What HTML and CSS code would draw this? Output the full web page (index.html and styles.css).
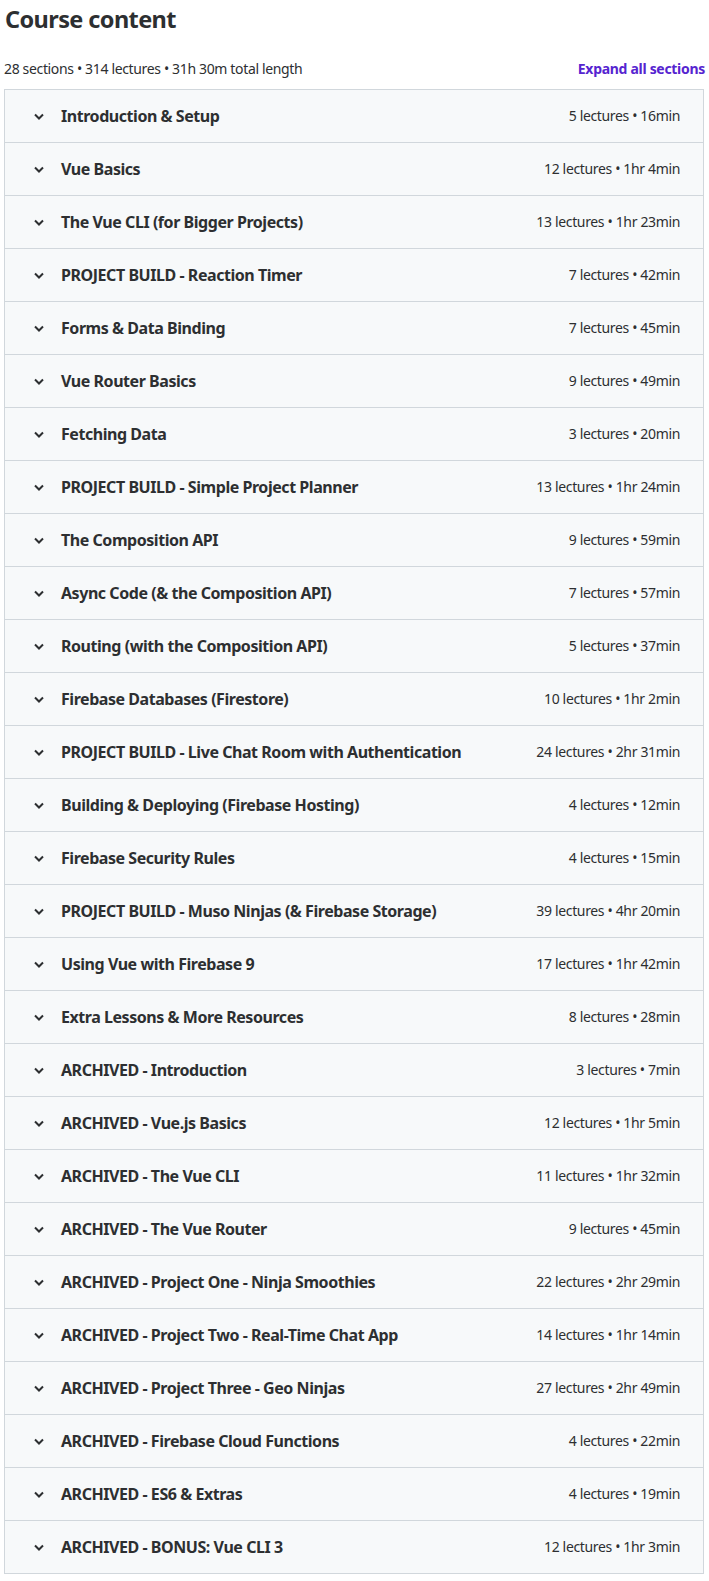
FILE: index.html
```html
<!DOCTYPE html>
<html lang="en">
<head>
<meta charset="utf-8">
<title>Course content</title>
<link rel="stylesheet" href="styles.css">
</head>
<body>
<div class="page">
  <h2 class="heading">Course content</h2>
  <div class="summary">
    <span class="summary-text">28 sections • 314 lectures • 31h 30m total length</span>
    <button class="expand">Expand all sections</button>
  </div>
  <div class="sections">
    <div class="section"><span class="chev"><svg viewBox="0 0 20 20" width="20" height="20"><path d="M6 8.5 L10 12.5 L14 8.5" /></svg></span><span class="title">Introduction &amp; Setup</span><span class="meta">5 lectures • 16min</span></div>
    <div class="section"><span class="chev"><svg viewBox="0 0 20 20" width="20" height="20"><path d="M6 8.5 L10 12.5 L14 8.5" /></svg></span><span class="title">Vue Basics</span><span class="meta">12 lectures • 1hr 4min</span></div>
    <div class="section"><span class="chev"><svg viewBox="0 0 20 20" width="20" height="20"><path d="M6 8.5 L10 12.5 L14 8.5" /></svg></span><span class="title">The Vue CLI (for Bigger Projects)</span><span class="meta">13 lectures • 1hr 23min</span></div>
    <div class="section"><span class="chev"><svg viewBox="0 0 20 20" width="20" height="20"><path d="M6 8.5 L10 12.5 L14 8.5" /></svg></span><span class="title">PROJECT BUILD - Reaction Timer</span><span class="meta">7 lectures • 42min</span></div>
    <div class="section"><span class="chev"><svg viewBox="0 0 20 20" width="20" height="20"><path d="M6 8.5 L10 12.5 L14 8.5" /></svg></span><span class="title">Forms &amp; Data Binding</span><span class="meta">7 lectures • 45min</span></div>
    <div class="section"><span class="chev"><svg viewBox="0 0 20 20" width="20" height="20"><path d="M6 8.5 L10 12.5 L14 8.5" /></svg></span><span class="title">Vue Router Basics</span><span class="meta">9 lectures • 49min</span></div>
    <div class="section"><span class="chev"><svg viewBox="0 0 20 20" width="20" height="20"><path d="M6 8.5 L10 12.5 L14 8.5" /></svg></span><span class="title">Fetching Data</span><span class="meta">3 lectures • 20min</span></div>
    <div class="section"><span class="chev"><svg viewBox="0 0 20 20" width="20" height="20"><path d="M6 8.5 L10 12.5 L14 8.5" /></svg></span><span class="title">PROJECT BUILD - Simple Project Planner</span><span class="meta">13 lectures • 1hr 24min</span></div>
    <div class="section"><span class="chev"><svg viewBox="0 0 20 20" width="20" height="20"><path d="M6 8.5 L10 12.5 L14 8.5" /></svg></span><span class="title">The Composition API</span><span class="meta">9 lectures • 59min</span></div>
    <div class="section"><span class="chev"><svg viewBox="0 0 20 20" width="20" height="20"><path d="M6 8.5 L10 12.5 L14 8.5" /></svg></span><span class="title">Async Code (&amp; the Composition API)</span><span class="meta">7 lectures • 57min</span></div>
    <div class="section"><span class="chev"><svg viewBox="0 0 20 20" width="20" height="20"><path d="M6 8.5 L10 12.5 L14 8.5" /></svg></span><span class="title">Routing (with the Composition API)</span><span class="meta">5 lectures • 37min</span></div>
    <div class="section"><span class="chev"><svg viewBox="0 0 20 20" width="20" height="20"><path d="M6 8.5 L10 12.5 L14 8.5" /></svg></span><span class="title">Firebase Databases (Firestore)</span><span class="meta">10 lectures • 1hr 2min</span></div>
    <div class="section"><span class="chev"><svg viewBox="0 0 20 20" width="20" height="20"><path d="M6 8.5 L10 12.5 L14 8.5" /></svg></span><span class="title">PROJECT BUILD - Live Chat Room with Authentication</span><span class="meta">24 lectures • 2hr 31min</span></div>
    <div class="section"><span class="chev"><svg viewBox="0 0 20 20" width="20" height="20"><path d="M6 8.5 L10 12.5 L14 8.5" /></svg></span><span class="title">Building &amp; Deploying (Firebase Hosting)</span><span class="meta">4 lectures • 12min</span></div>
    <div class="section"><span class="chev"><svg viewBox="0 0 20 20" width="20" height="20"><path d="M6 8.5 L10 12.5 L14 8.5" /></svg></span><span class="title">Firebase Security Rules</span><span class="meta">4 lectures • 15min</span></div>
    <div class="section"><span class="chev"><svg viewBox="0 0 20 20" width="20" height="20"><path d="M6 8.5 L10 12.5 L14 8.5" /></svg></span><span class="title">PROJECT BUILD - Muso Ninjas (&amp; Firebase Storage)</span><span class="meta">39 lectures • 4hr 20min</span></div>
    <div class="section"><span class="chev"><svg viewBox="0 0 20 20" width="20" height="20"><path d="M6 8.5 L10 12.5 L14 8.5" /></svg></span><span class="title">Using Vue with Firebase 9</span><span class="meta">17 lectures • 1hr 42min</span></div>
    <div class="section"><span class="chev"><svg viewBox="0 0 20 20" width="20" height="20"><path d="M6 8.5 L10 12.5 L14 8.5" /></svg></span><span class="title">Extra Lessons &amp; More Resources</span><span class="meta">8 lectures • 28min</span></div>
    <div class="section"><span class="chev"><svg viewBox="0 0 20 20" width="20" height="20"><path d="M6 8.5 L10 12.5 L14 8.5" /></svg></span><span class="title">ARCHIVED - Introduction</span><span class="meta">3 lectures • 7min</span></div>
    <div class="section"><span class="chev"><svg viewBox="0 0 20 20" width="20" height="20"><path d="M6 8.5 L10 12.5 L14 8.5" /></svg></span><span class="title">ARCHIVED - Vue.js Basics</span><span class="meta">12 lectures • 1hr 5min</span></div>
    <div class="section"><span class="chev"><svg viewBox="0 0 20 20" width="20" height="20"><path d="M6 8.5 L10 12.5 L14 8.5" /></svg></span><span class="title">ARCHIVED - The Vue CLI</span><span class="meta">11 lectures • 1hr 32min</span></div>
    <div class="section"><span class="chev"><svg viewBox="0 0 20 20" width="20" height="20"><path d="M6 8.5 L10 12.5 L14 8.5" /></svg></span><span class="title">ARCHIVED - The Vue Router</span><span class="meta">9 lectures • 45min</span></div>
    <div class="section"><span class="chev"><svg viewBox="0 0 20 20" width="20" height="20"><path d="M6 8.5 L10 12.5 L14 8.5" /></svg></span><span class="title">ARCHIVED - Project One - Ninja Smoothies</span><span class="meta">22 lectures • 2hr 29min</span></div>
    <div class="section"><span class="chev"><svg viewBox="0 0 20 20" width="20" height="20"><path d="M6 8.5 L10 12.5 L14 8.5" /></svg></span><span class="title">ARCHIVED - Project Two - Real-Time Chat App</span><span class="meta">14 lectures • 1hr 14min</span></div>
    <div class="section"><span class="chev"><svg viewBox="0 0 20 20" width="20" height="20"><path d="M6 8.5 L10 12.5 L14 8.5" /></svg></span><span class="title">ARCHIVED - Project Three - Geo Ninjas</span><span class="meta">27 lectures • 2hr 49min</span></div>
    <div class="section"><span class="chev"><svg viewBox="0 0 20 20" width="20" height="20"><path d="M6 8.5 L10 12.5 L14 8.5" /></svg></span><span class="title">ARCHIVED - Firebase Cloud Functions</span><span class="meta">4 lectures • 22min</span></div>
    <div class="section"><span class="chev"><svg viewBox="0 0 20 20" width="20" height="20"><path d="M6 8.5 L10 12.5 L14 8.5" /></svg></span><span class="title">ARCHIVED - ES6 &amp; Extras</span><span class="meta">4 lectures • 19min</span></div>
    <div class="section"><span class="chev"><svg viewBox="0 0 20 20" width="20" height="20"><path d="M6 8.5 L10 12.5 L14 8.5" /></svg></span><span class="title">ARCHIVED - BONUS: Vue CLI 3</span><span class="meta">12 lectures • 1hr 3min</span></div>
  </div>
</div>
</body>
</html>
```

FILE: styles.css
```css
* { box-sizing: border-box; }
html, body { margin: 0; padding: 0; background: #ffffff; }
body {
  font-family: "Noto Sans", "Open Sans", sans-serif;
  color: #2d2f31;
}
.page {
  padding: 0 5px 0 4px;
}
.heading {
  margin: 0;
  padding: 0 0 0 1px;
  font-size: 23.5px;
  letter-spacing: -0.6px;
  line-height: 38px;
  font-weight: 700;
  color: #2d2f31;
}
.summary {
  display: flex;
  justify-content: space-between;
  align-items: center;
  margin-top: 13px;
  height: 38px;
  padding-bottom: 2px;
}
.summary-text {
  font-size: 14px;
  letter-spacing: -0.35px;
  line-height: 20px;
}
.expand {
  border: 0;
  background: none;
  padding: 0;
  margin-right: -1px;
  font-family: inherit;
  font-size: 14px;
  letter-spacing: -0.3px;
  line-height: 20px;
  font-weight: 700;
  color: #5624d0;
  cursor: pointer;
}
.sections {
  border: 1px solid #d1d7dc;
}
.section {
  display: flex;
  align-items: center;
  height: 53px;
  padding: 0 23px 0 24px;
  background: #f7f9fa;
  border-bottom: 1px solid #d1d7dc;
}
.section:last-child {
  border-bottom: 0;
  height: 52px;
}
.chev {
  display: flex;
  width: 20px;
  height: 20px;
  margin-right: 12px;
  flex: none;
}
.chev svg path {
  fill: none;
  stroke: #2d2f31;
  stroke-width: 2;
  stroke-linecap: butt;
  stroke-linejoin: miter;
}
.title {
  flex: 1;
  font-size: 16px;
  letter-spacing: -0.45px;
  font-weight: 700;
  line-height: 22px;
}
.meta {
  font-size: 14px;
  letter-spacing: -0.35px;
  line-height: 20px;
  white-space: nowrap;
}
```
